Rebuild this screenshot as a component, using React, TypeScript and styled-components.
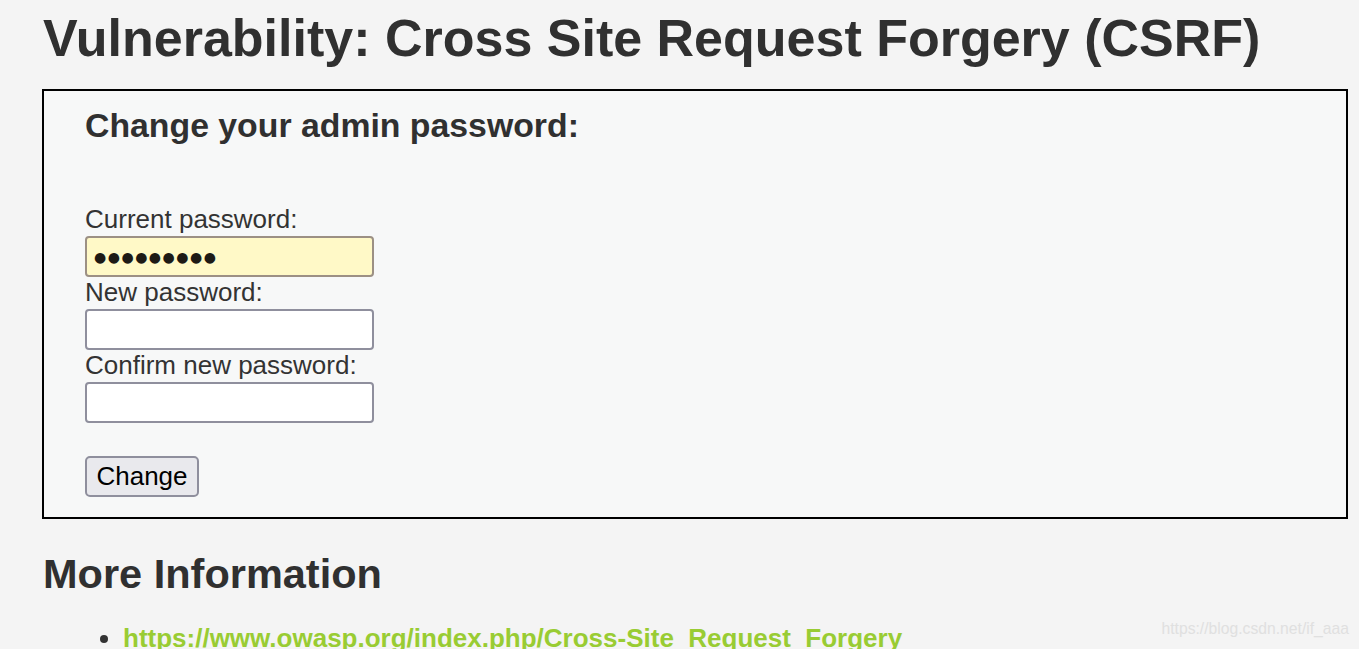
import React from "react";
import styled, { createGlobalStyle } from "styled-components";

const Global = createGlobalStyle`
  html, body { margin: 0; padding: 0; background: #f4f4f4; }
  body { font-family: "Liberation Sans", Arial, sans-serif; color: #333; overflow: hidden; }
`;

const Page = styled.div`
  position: relative;
  width: 1359px;
  height: 649px;
  overflow: hidden;
  padding: 9px 11px 0 42px;
  box-sizing: border-box;
`;

const Title = styled.h1`
  margin: 0 0 22px 1px;
  font-size: 52px;
  font-weight: bold;
  line-height: 58px;
  color: #303030;
`;

const Panel = styled.div`
  border: 2px solid #000;
  background: #f7f8f8;
  padding: 16px 41px 20px 41px;
`;

const PanelHeading = styled.h3`
  margin: 0 0 62px 0;
  font-size: 33.8px;
  font-weight: bold;
  line-height: 36px;
  color: #303030;
`;

const Form = styled.form`
  display: flex;
  flex-direction: column;
  align-items: flex-start;
`;

const Label = styled.label`
  font-size: 26px;
  line-height: 29px;
  margin-bottom: 2px;
  color: #333;
`;

const Field = styled.input<{ $filled?: boolean }>`
  box-sizing: border-box;
  width: 289px;
  height: 41px;
  margin: 0 0 1px 0;
  padding: 0 0 0 7px;
  border: 2px solid ${(p) => (p.$filled ? "#9c9084" : "#8f8f9d")};
  border-radius: 4px;
  background: ${(p) => (p.$filled ? "#fff9c7" : "#fff")};
  font-family: "DejaVu Sans", sans-serif;
  font-size: 14px;
  letter-spacing: 1.5px;
  color: #1d1a15;
  outline: none;
`;

const Spacer = styled.div`
  height: 32px;
`;

const Button = styled.button`
  box-sizing: border-box;
  height: 41px;
  width: 114px;
  padding: 0;
  border: 2px solid #8f8f9d;
  border-radius: 5px;
  background: #e9e9ed;
  font-family: "Liberation Sans", Arial, sans-serif;
  font-size: 26px;
  color: #000;
`;

const SectionTitle = styled.h2`
  margin: 31px 0 0 1px;
  font-size: 41.5px;
  font-weight: bold;
  line-height: 48px;
  color: #303030;
`;

const List = styled.ul`
  margin: 25px 0 0 0;
  padding-left: 81px;
  font-size: 26px;
  line-height: 30px;
  color: #333;
`;

const Link = styled.a`
  color: #99cc33;
  font-weight: bold;
  text-decoration: none;
`;

const Watermark = styled.div`
  position: absolute;
  right: 10px;
  bottom: 11px;
  font-family: "Liberation Sans", Arial, sans-serif;
  font-size: 15.7px;
  color: #e0e0e0;
  pointer-events: none;
`;

export default function App() {
  return (
    <>
      <Global />
      <Page>
        <Title>Vulnerability: Cross Site Request Forgery (CSRF)</Title>
        <Panel>
          <PanelHeading>Change your admin password:</PanelHeading>
          <Form onSubmit={(e) => e.preventDefault()}>
            <Label>Current password:</Label>
            <Field $filled type="text" readOnly value="●●●●●●●●●" aria-label="Current password" />
            <Label>New password:</Label>
            <Field type="password" />
            <Label>Confirm new password:</Label>
            <Field type="password" />
            <Spacer />
            <Button type="submit">Change</Button>
          </Form>
        </Panel>
        <SectionTitle>More Information</SectionTitle>
        <List>
          <li>
            <Link href="#">https://www.owasp.org/index.php/Cross-Site_Request_Forgery</Link>
          </li>
        </List>
        <Watermark>https://blog.csdn.net/if_aaa</Watermark>
      </Page>
    </>
  );
}
